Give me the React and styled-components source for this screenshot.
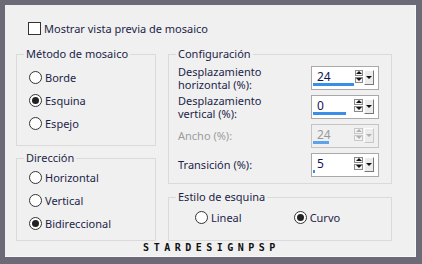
import React from 'react';
import styled, { createGlobalStyle } from 'styled-components';

const GlobalStyle = createGlobalStyle`
  html, body {
    margin: 0;
    padding: 0;
    background: #6b6a76;
  }
  body {
    font-family: "Noto Sans", "Open Sans", sans-serif;
    font-size: 11px;
    color: #1c1f48;
  }
`

const spinners = [
  { label: ['Desplazamiento', 'horizontal (%):'], value: '24', bar: 41 },
  { label: ['Desplazamiento', 'vertical (%):'], value: '0', bar: 33 },
  { label: ['Ancho (%):'], value: '24', bar: 16, disabled: true },
  { label: ['Transición (%):'], value: '5', bar: 2 }
]

const Spinner = ({ value, bar, disabled }) => (
  <SpinBox $disabled={disabled}>
    <Field>
      <Value $disabled={disabled}>{value}</Value>
      <Track>
        <Bar $disabled={disabled} style={{ width: bar }} />
      </Track>
    </Field>
    <SpinCol>
      <SpinBtn $disabled={disabled}><Arrow $up $disabled={disabled} /></SpinBtn>
      <SpinBtn $disabled={disabled}><Arrow $disabled={disabled} /></SpinBtn>
    </SpinCol>
    <DropBtn $disabled={disabled}><Arrow $disabled={disabled} /></DropBtn>
  </SpinBox>
)

const Radio = ({ label, checked }) => (
  <RadioRow>
    <RadioCircle>{checked && <RadioDot />}</RadioCircle>
    <span>{label}</span>
  </RadioRow>
)

const App = () => {
  return (
    <Frame>
      <GlobalStyle />
      <Panel>
        <CheckRow>
          <CheckBox />
          <span>Mostrar vista previa de mosaico</span>
        </CheckRow>
        <Columns>
          <Column>
            <Group $height={100}>
              <Legend>Método de mosaico</Legend>
              <RadioList $top={4}>
                <Radio label='Borde' />
                <Radio label='Esquina' checked />
                <Radio label='Espejo' />
              </RadioList>
            </Group>
            <Group $height={91}>
              <Legend>Dirección</Legend>
              <RadioList $top={0}>
                <Radio label='Horizontal' />
                <Radio label='Vertical' />
                <Radio label='Bidireccional' checked />
              </RadioList>
            </Group>
          </Column>
          <Column>
            <Group $height={138}>
              <Legend>Configuración</Legend>
              <ConfigList>
                {spinners.map((s, i) => (
                  <ConfigRow key={i}>
                    <ConfigLabel $disabled={s.disabled}>
                      {s.label.map((l, j) => <LabelLine key={j}>{l}</LabelLine>)}
                    </ConfigLabel>
                    <Spinner value={s.value} bar={s.bar} disabled={s.disabled} />
                  </ConfigRow>
                ))}
              </ConfigList>
            </Group>
            <Group $height={52}>
              <Legend>Estilo de esquina</Legend>
              <CornerRow>
                <Radio label='Lineal' />
                <Radio label='Curvo' checked />
              </CornerRow>
            </Group>
          </Column>
        </Columns>
        <Watermark>STARDESIGNPSP</Watermark>
      </Panel>
    </Frame>
  )
}

const Frame = styled.div`
  width: 422px;
  height: 264px;
  box-sizing: border-box;
  padding: 5px 6px 7px 5px;
  background: #6b6a76;
`

const Panel = styled.div`
  width: 411px;
  height: 252px;
  box-sizing: border-box;
  background: #f0f0f0;
  border-right: 1px solid #f9f9f9;
  border-bottom: 1px solid #f9f9f9;
  padding: 17px 0 0 11px;
  display: flex;
  flex-direction: column;
`

const CheckRow = styled.div`
  display: flex;
  align-items: center;
  gap: 3px;
  height: 13px;
  padding-left: 12px;
`

const CheckBox = styled.div`
  width: 13px;
  height: 13px;
  box-sizing: border-box;
  border: 1px solid #333;
  background: #fff;
`

const Columns = styled.div`
  display: flex;
  gap: 12px;
  margin-top: 11px;
`

const Column = styled.div`
  display: flex;
  flex-direction: column;
  gap: 4px;
  &:first-child { width: 140px; }
  &:last-child { width: 224px; gap: 5px; }
`

const Group = styled.fieldset`
  margin: 0;
  padding: 0;
  height: ${p => p.$height}px;
  box-sizing: border-box;
  border: 1px solid #dadada;
  min-width: 0;
`

const Legend = styled.legend`
  margin-left: 7px;
  padding: 0 2px;
  line-height: 16px;
`

const RadioList = styled.div`
  display: flex;
  flex-direction: column;
  padding-top: ${p => p.$top}px;
  padding-left: 12px;
`

const RadioRow = styled.div`
  display: flex;
  align-items: center;
  gap: 3px;
  height: 23px;
`

const RadioCircle = styled.div`
  width: 13px;
  height: 13px;
  box-sizing: border-box;
  border: 1px solid #333;
  border-radius: 50%;
  background: #fff;
  display: flex;
  align-items: center;
  justify-content: center;
`

const RadioDot = styled.div`
  width: 7px;
  height: 7px;
  border-radius: 50%;
  background: #222;
`

const ConfigList = styled.div`
  display: flex;
  flex-direction: column;
  padding: 1px 0 0 9px;
`

const ConfigRow = styled.div`
  display: flex;
  align-items: center;
  justify-content: space-between;
  height: 29px;
  padding-right: 12px;
`

const ConfigLabel = styled.div`
  color: ${p => p.$disabled ? '#9c9c9c' : 'inherit'};
`

const LabelLine = styled.div`
  height: 13px;
  line-height: 13px;
`

const SpinBox = styled.div`
  width: 68px;
  height: 24px;
  box-sizing: border-box;
  border: 1px solid ${p => p.$disabled ? '#c4c4c4' : '#a9a9a9'};
  background: ${p => p.$disabled ? '#f0f0f0' : '#fff'};
  display: flex;
  padding: 2px 4px 2px 1px;
  gap: 1px;
`

const Field = styled.div`
  flex: 1;
  display: flex;
  flex-direction: column;
  justify-content: space-between;
`

const Value = styled.div`
  padding: 1px 0 0 4px;
  font-size: 12px;
  line-height: 13px;
  color: ${p => p.$disabled ? '#9a9a9a' : '#14145a'};
`

const Track = styled.div`
  height: 3px;
  margin-bottom: 1px;
`

const Bar = styled.div`
  height: 3px;
  background: ${p => p.$disabled ? '#5ba3ea' : '#3b8ee8'};
`

const SpinCol = styled.div`
  display: flex;
  flex-direction: column;
  gap: 1px;
  padding-top: 1px;
  width: 9px;
`

const SpinBtn = styled.div`
  height: 6px;
  box-sizing: border-box;
  border: 1px solid ${p => p.$disabled ? '#c8c8c8' : '#8a8a8a'};
  background: #f4f4f4;
  display: flex;
  align-items: center;
  justify-content: center;
`

const DropBtn = styled.div`
  width: 10px;
  height: 15px;
  margin-top: 1px;
  box-sizing: border-box;
  border-top: 1px solid #fff;
  border-left: 1px solid #fff;
  border-right: 1px solid ${p => p.$disabled ? '#c8c8c8' : '#777'};
  border-bottom: 1px solid ${p => p.$disabled ? '#c8c8c8' : '#777'};
  background: #ececec;
  display: flex;
  align-items: center;
  justify-content: center;
`

const Arrow = styled.div`
  width: 0;
  height: 0;
  border-left: 3px solid transparent;
  border-right: 3px solid transparent;
  ${p => p.$up
    ? `border-bottom: 3px solid ${p.$disabled ? '#b0b0b0' : '#111'};`
    : `border-top: 3px solid ${p.$disabled ? '#b0b0b0' : '#111'};`}
`

const CornerRow = styled.div`
  display: flex;
  padding: 1px 0 0 26px;
  gap: 52px;
`

const Watermark = styled.div`
  margin-top: 1px;
  padding-right: 8px;
  text-align: center;
  font-family: "DejaVu Sans Mono", monospace;
  font-weight: bold;
  font-size: 10px;
  letter-spacing: 4.5px;
  color: #111;
`

export default App
